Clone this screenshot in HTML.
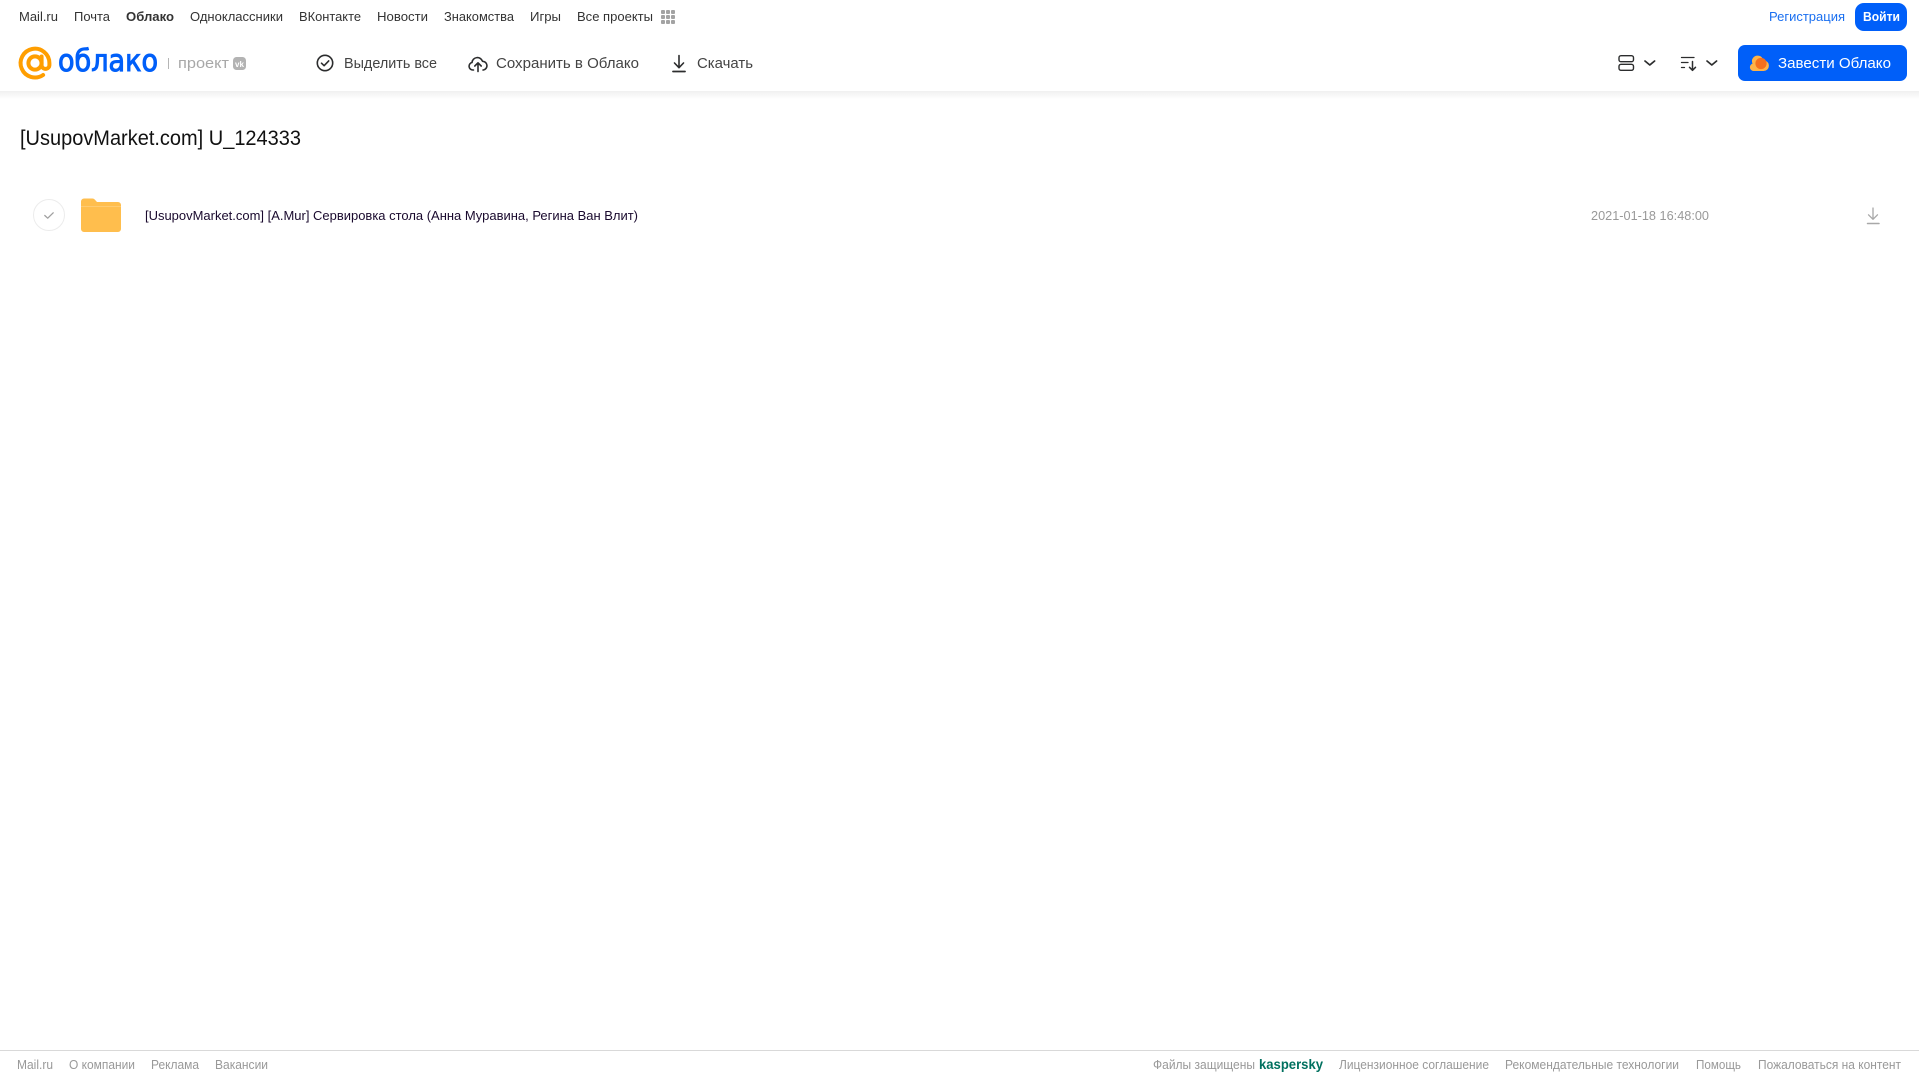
<!DOCTYPE html>
<html lang="ru">
<head>
<meta charset="utf-8">
<title>[UsupovMarket.com] U_124333</title>
<style>
html,body{margin:0;padding:0;background:#fff;width:1919px;height:1079px;overflow:hidden}
svg{display:block;position:absolute;left:0;top:0}
text{font-family:"Liberation Sans",sans-serif}
.n{font-size:13px;fill:#333}
.h{font-size:14.5px;fill:#444}
.f{font-size:12.5px;fill:#999}
</style>
</head>
<body>
<svg width="1919" height="1079" viewBox="0 0 1919 1079" xmlns="http://www.w3.org/2000/svg">
<defs>
<linearGradient id="sh" x1="0" y1="0" x2="0" y2="1"><stop offset="0" stop-color="#f0f0f0"/><stop offset="1" stop-color="#fff"/></linearGradient>
</defs>
<rect width="1919" height="1079" fill="#fff"/>
<rect x="0" y="91" width="1919" height="8" fill="url(#sh)"/>

<!-- top nav -->
<text class="n" x="19" y="21" textLength="39" lengthAdjust="spacingAndGlyphs">Mail.ru</text>
<text class="n" x="74" y="21" textLength="36" lengthAdjust="spacingAndGlyphs">Почта</text>
<text class="n" x="126" y="21" textLength="48" lengthAdjust="spacingAndGlyphs" style="font-weight:700">Облако</text>
<text class="n" x="190" y="21" textLength="93" lengthAdjust="spacingAndGlyphs">Одноклассники</text>
<text class="n" x="299" y="21" textLength="62" lengthAdjust="spacingAndGlyphs">ВКонтакте</text>
<text class="n" x="377" y="21" textLength="51" lengthAdjust="spacingAndGlyphs">Новости</text>
<text class="n" x="444" y="21" textLength="70" lengthAdjust="spacingAndGlyphs">Знакомства</text>
<text class="n" x="530" y="21" textLength="31" lengthAdjust="spacingAndGlyphs">Игры</text>
<text class="n" x="577" y="21" textLength="76" lengthAdjust="spacingAndGlyphs">Все проекты</text>
<g fill="#a3a3a3">
<rect x="661" y="10" width="4" height="4" rx="1"/><rect x="666" y="10" width="4" height="4" rx="1"/><rect x="671" y="10" width="4" height="4" rx="1"/>
<rect x="661" y="15" width="4" height="4" rx="1"/><rect x="666" y="15" width="4" height="4" rx="1"/><rect x="671" y="15" width="4" height="4" rx="1"/>
<rect x="661" y="20" width="4" height="4" rx="1"/><rect x="666" y="20" width="4" height="4" rx="1"/><rect x="671" y="20" width="4" height="4" rx="1"/>
</g>
<text x="1769" y="21" font-size="13" fill="#1a6ff0" textLength="76" lengthAdjust="spacingAndGlyphs">Регистрация</text>
<rect x="1855" y="3" width="52" height="28" rx="9" fill="#005ff9"/>
<text x="1863" y="21" font-size="13" fill="#fff" style="font-weight:700" textLength="37" lengthAdjust="spacingAndGlyphs">Войти</text>

<!-- logo -->
<g fill="none" stroke="#ff9e00" stroke-width="4">
<circle cx="35" cy="63" r="6.6"/>
<path d="M41.6 56.5v8.5a3.900 3.900 0 0 0 7.800 0v-2a14.400 14.400 0 1 0-6.300 12" stroke-linecap="round"/>
</g>
<text x="58" y="71" font-size="30" fill="#005ff9" stroke="#005ff9" stroke-width="1" style="font-family:'DejaVu Sans',sans-serif" textLength="100" lengthAdjust="spacingAndGlyphs">облако</text>
<rect x="168" y="58" width="1" height="11" fill="#b5b5b5"/>
<text x="178" y="68" font-size="15" fill="#a8a8a8" textLength="51" lengthAdjust="spacingAndGlyphs">проект</text>
<rect x="233" y="57" width="13" height="13" rx="3.500" fill="#b3b3b3"/>
<text x="235" y="67" font-size="8" fill="#fff" style="font-weight:700" textLength="9" lengthAdjust="spacingAndGlyphs">vk</text>

<!-- toolbar -->
<g fill="none" stroke="#2c2d2e" stroke-width="1.600" stroke-linecap="round" stroke-linejoin="round">
<circle cx="325" cy="63" r="7.700"/>
<path d="M321.500 63.200l2.600 2.500 4.600-4.800"/>
<path d="M473.500 70h-.5a3.800 3.800 0 0 1-1-7.500 5.400 5.400 0 0 1 10.500-1.200 4.400 4.400 0 0 1 1 8.700h-.5"/>
<path d="M478 71.500v-8.500M474.800 66l3.200-3.200 3.200 3.200"/>
<path d="M679 55.500v12M674.500 63l4.500 4.700 4.500-4.700"/>
<path d="M673 71.500h12" stroke-width="1.800"/>
</g>
<text class="h" x="344" y="68" textLength="93" lengthAdjust="spacingAndGlyphs">Выделить все</text>
<text class="h" x="496" y="68" textLength="143" lengthAdjust="spacingAndGlyphs">Сохранить в Облако</text>
<text class="h" x="697" y="68" textLength="56" lengthAdjust="spacingAndGlyphs">Скачать</text>

<!-- view / sort -->
<g fill="none" stroke="#2c2d2e" stroke-linecap="round" stroke-linejoin="round">
<rect x="1619" y="55.700" width="14.500" height="6" rx="2" stroke-width="1.400"/>
<rect x="1619" y="64.300" width="14.500" height="6" rx="2" stroke-width="1.400"/>
<path d="M1645 61l4.800 4 4.800-4" stroke-width="1.700"/>
<path d="M1707 61l4.800 4 4.800-4" stroke-width="1.700"/>
<path d="M1681.500 57.500h12.500M1681.500 62.500h6.500M1681.500 67.500h3" stroke-width="1.300"/>
<path d="M1692.500 61.500v8.500M1689.500 67.300l3 3 3-3" stroke-width="1.500"/>
</g>

<!-- CTA -->
<rect x="1738" y="45" width="169" height="36" rx="7" fill="#005ff9"/>
<path d="M1756 71h-2.500a3.800 3.800 0 0 1-1-7.400 5.600 5.600 0 0 1 5.500-8 5 5 0 0 1 4.500 2.900l3.500 2.500a5.300 5.300 0 0 1 2.900 4.700 5.300 5.300 0 0 1-5.300 5.300z" fill="#ffb347"/>
<circle cx="1761" cy="63.500" r="5.600" fill="#f5701e"/>
<text x="1778" y="68" font-size="14.500" fill="#fff" textLength="113" lengthAdjust="spacingAndGlyphs">Завести Облако</text>

<!-- title -->
<text x="20" y="145" font-size="21" fill="#111" textLength="281" lengthAdjust="spacingAndGlyphs">[UsupovMarket.com] U_124333</text>

<!-- row -->
<circle cx="49" cy="215" r="15.500" fill="#fff" stroke="#ececec" stroke-width="1"/>
<path d="M44.800 215.500l2.900 2.700 5.500-5.400" fill="none" stroke="#a0a0a0" stroke-width="1.300" stroke-linecap="round" stroke-linejoin="round"/>
<path d="M81 201.500a3 3 0 0 1 3-3h8.500a3 3 0 0 1 2.200 1l2.300 2.500h21a3 3 0 0 1 3 3v24a3 3 0 0 1-3 3H84a3 3 0 0 1-3-3z" fill="#ffbe4d"/>
<rect x="81" y="206" width="40" height="1" fill="#ffcb70"/>
<text x="145" y="220" font-size="12.500" fill="#1a0a2e" textLength="493" lengthAdjust="spacingAndGlyphs">[UsupovMarket.com] [A.Mur] Сервировка стола (Анна Муравина, Регина Ван Влит)</text>
<text x="1591" y="220" font-size="12.500" fill="#999" textLength="118" lengthAdjust="spacingAndGlyphs">2021-01-18 16:48:00</text>
<g fill="none" stroke="#a8a8a8" stroke-width="1.300" stroke-linecap="round" stroke-linejoin="round">
<path d="M1873 208v11M1868.500 214.800l4.500 4.500 4.500-4.500"/>
<path d="M1867.500 223.500h11.500" stroke-width="1.500"/>
</g>

<!-- footer -->
<rect x="0" y="1050" width="1919" height="1" fill="#d9d9d9"/>
<text class="f" x="17" y="1069" textLength="36" lengthAdjust="spacingAndGlyphs">Mail.ru</text>
<text class="f" x="69" y="1069" textLength="66" lengthAdjust="spacingAndGlyphs">О компании</text>
<text class="f" x="151" y="1069" textLength="48" lengthAdjust="spacingAndGlyphs">Реклама</text>
<text class="f" x="215" y="1069" textLength="53" lengthAdjust="spacingAndGlyphs">Вакансии</text>
<text class="f" x="1153" y="1069" textLength="102" lengthAdjust="spacingAndGlyphs">Файлы защищены</text>
<text x="1259" y="1069" font-size="13.500" fill="#00705f" style="font-weight:700" textLength="64" lengthAdjust="spacingAndGlyphs">kaspersky</text>
<text class="f" x="1339" y="1069" textLength="150" lengthAdjust="spacingAndGlyphs">Лицензионное соглашение</text>
<text class="f" x="1505" y="1069" textLength="174" lengthAdjust="spacingAndGlyphs">Рекомендательные технологии</text>
<text class="f" x="1696" y="1069" textLength="45" lengthAdjust="spacingAndGlyphs">Помощь</text>
<text class="f" x="1758" y="1069" textLength="143" lengthAdjust="spacingAndGlyphs">Пожаловаться на контент</text>
</svg>
</body>
</html>
